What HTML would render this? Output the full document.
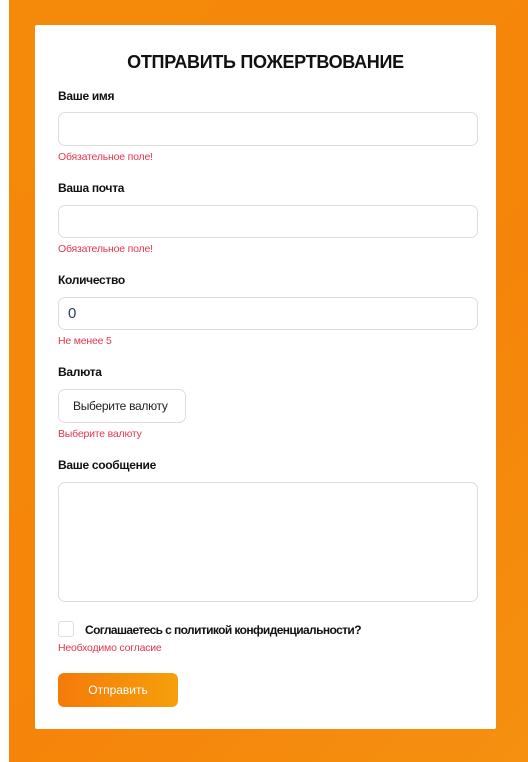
<!DOCTYPE html>
<html><head><meta charset="utf-8"><style>
*{margin:0;padding:0;box-sizing:border-box}
body{width:528px;height:762px;background:#fff;position:relative;overflow:hidden;font-family:"Liberation Sans","Noto Sans CJK SC",sans-serif}
.bg{position:absolute;left:9px;top:0;width:519px;height:762px;background:linear-gradient(135deg,#f58a0a,#f5850a 60%,#f59010)}
.card{position:absolute;left:35px;top:25px;width:461px;height:704px;background:#fff;border-radius:2px}
.a{position:absolute;white-space:nowrap}
.t{left:0;width:461px;text-align:center;top:27px;font-size:18px;font-weight:bold;color:#111;letter-spacing:-0.3px}
.l{left:23px;font-size:12px;font-weight:bold;color:#111;letter-spacing:-0.3px}
.e{left:23px;font-size:10.5px;color:#e5364f;letter-spacing:-0.2px}
.i{position:absolute;left:23px;width:420px;border:1px solid #ddd;border-radius:7px;background:#fff}
</style></head><body>
<div class="bg"></div>
<div class="card">
<div class="a t">ОТПРАВИТЬ ПОЖЕРТВОВАНИЕ</div>
<div class="a l" style="top:64px">Ваше имя</div>
<div class="i" style="top:87px;height:34px"></div>
<div class="a e" style="top:126px">Обязательное поле!</div>
<div class="a l" style="top:156px">Ваша почта</div>
<div class="i" style="top:180px;height:33px"></div>
<div class="a e" style="top:218px">Обязательное поле!</div>
<div class="a l" style="top:248px">Количество</div>
<div class="i" style="top:272px;height:33px"></div>
<div class="a" style="left:33px;top:280px;font-size:15px;color:#2a3a70">0</div>
<div class="a e" style="top:310px">Не менее 5</div>
<div class="a l" style="top:340px">Валюта</div>
<div class="i" style="top:364px;height:34px;width:128px"></div>
<div class="a" style="left:38px;top:374px;font-size:12px;color:#222;letter-spacing:-0.3px">Выберите валюту</div>
<div class="a e" style="top:403px">Выберите валюту</div>
<div class="a l" style="top:433px">Ваше сообщение</div>
<div class="i" style="top:457px;height:120px"></div>
<div class="i" style="top:596px;height:16px;width:16px;border-radius:3px"></div>
<div class="a l" style="left:50px;top:598px;letter-spacing:-0.6px">Соглашаетесь с политикой конфиденциальности?</div>
<div class="a e" style="top:617px">Необходимо согласие</div>
<div class="a" style="left:23px;top:648px;width:120px;height:34px;border-radius:6px;background:linear-gradient(90deg,#f57a0a,#f5a00a);color:#fff;font-size:12px;text-align:center;line-height:34px">Отправить</div>
</div>
</body></html>
